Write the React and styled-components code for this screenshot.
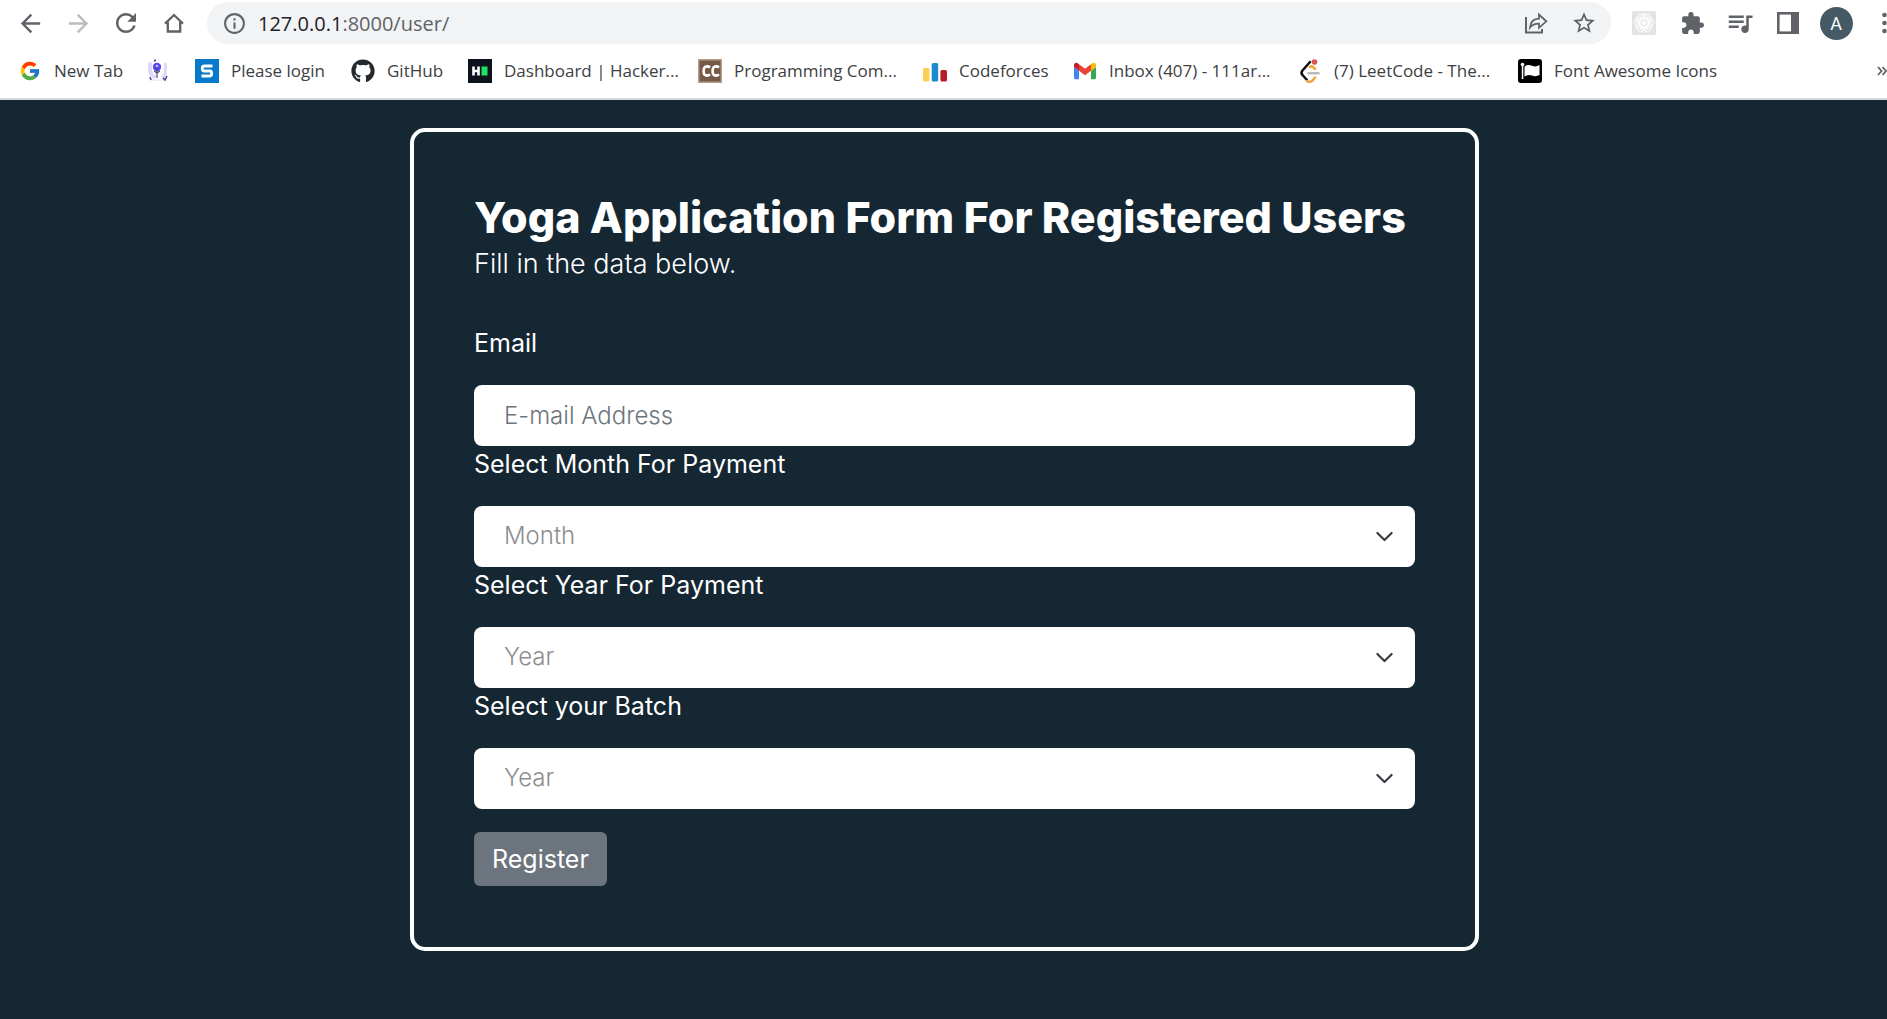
import React from "react";
import styled, { createGlobalStyle } from "styled-components";
import { MdArrowBack, MdArrowForward, MdRefresh, MdStarBorder, MdExtension, MdQueueMusic, MdInfoOutline } from "react-icons/md";
import { FcGoogle } from "react-icons/fc";
import { FaGithub } from "react-icons/fa";

const uiFont = `"Open Sans", "Noto Sans", sans-serif`;
const pageFont = `Inter, "Open Sans", sans-serif`;

const GlobalStyle = createGlobalStyle`
  *, *::before, *::after { box-sizing: border-box; }
  body { margin: 0; background: #152733; }
  button, input, select { font: inherit; }
`;

const Screen = styled.div`
  min-height: 100vh;
  display: flex;
  flex-direction: column;
`;

const Chrome = styled.header`
  background: #fff;
  border-bottom: 2px solid #d5d8da;
  font-family: ${uiFont};
  overflow: hidden;
`;

const Toolbar = styled.div`
  display: flex;
  align-items: center;
  height: 46px;
  padding-left: 16px;
`;

const NavButtons = styled.nav`
  display: flex;
  gap: 20px;
  margin-right: 19px;
`;

const IconButton = styled.button`
  display: flex;
  align-items: center;
  justify-content: ${(p) => p.$align || "center"};
  flex: none;
  width: ${(p) => p.$width || 28}px;
  height: 34px;
  padding: 0;
  border: 0;
  background: none;
  color: ${(p) => (p.$faded ? "#babcbe" : "#5f6368")};
  svg { flex: none; }
`;

const AddressBar = styled.div`
  flex: 1;
  min-width: 0;
  height: 42px;
  display: flex;
  align-items: center;
  gap: 20px;
  padding: 0 13px;
  border-radius: 21px;
  background: #f1f3f4;
`;

const AddressText = styled.a`
  flex: 1;
  margin-left: -10px;
  color: #5f6368;
  font-size: 20px;
  text-decoration: none;
  white-space: nowrap;
`;

const Host = styled.span`
  color: #202124;
`;

const Extensions = styled.div`
  display: flex;
  gap: 16px;
  margin-left: 17px;
`;

const Avatar = styled.span`
  display: grid;
  place-items: center;
  flex: none;
  width: 33px;
  height: 33px;
  border-radius: 50%;
  background: #455a64;
  color: #fff;
  font: 18px Roboto, sans-serif;
`;

const BookmarkBar = styled.nav`
  display: flex;
  align-items: center;
  gap: 25px;
  height: 52px;
  padding: 0 0 2px 18px;
`;

const Bookmark = styled.a`
  display: flex;
  align-items: center;
  gap: 12px;
  flex: none;
  color: #3c4043;
  font-size: 17px;
  line-height: 24px;
  text-decoration: none;
  white-space: nowrap;
`;

const Favicon = styled.span`
  display: grid;
  place-items: center;
  width: 24px;
  height: 24px;
`;

const BookmarkName = styled.span`
  width: ${(p) => p.$width}px;
`;

const More = styled.button`
  margin-left: auto;
  padding: 0;
  border: 0;
  background: none;
  color: #5f6368;
  svg { display: block; }
`;

const Main = styled.main`
  flex: 1;
  padding: 28px 24px 28px 26px;
  color: #fff;
  font-family: ${pageFont};
`;

const Card = styled.form`
  max-width: 1069px;
  margin: 0 auto;
  padding: 60px 60px 61px;
  border: 4px solid #fff;
  border-radius: 15px;
`;

const Title = styled.h1`
  margin: 0;
  font-size: 43px;
  line-height: 50px;
  font-weight: 800;
  @media (min-width: 1120px) {
    white-space: nowrap;
  }
`;

const Intro = styled.p`
  margin: 0 0 39px;
  font-size: 27px;
  line-height: 44px;
  font-weight: 300;
`;

const Label = styled.label`
  display: block;
  margin-bottom: 24px;
  font-size: 25px;
  line-height: 36px;
  font-weight: 400;
`;

const fieldStyle = `
  display: block;
  width: 100%;
  height: 61px;
  padding: 0 30px;
  border: 0;
  border-radius: 8px;
  background: #fff;
  font-size: 24px;
  font-weight: 300;
`;

const TextInput = styled.input`
  ${fieldStyle}
  &::placeholder { color: #6c757d; opacity: 1; }
`;

const SelectBox = styled.div`
  display: grid;
  align-items: center;
  > * { grid-area: 1 / 1; }
  > svg { justify-self: end; margin-right: 21px; pointer-events: none; }
`;

const Select = styled.select`
  ${fieldStyle}
  padding-bottom: 2px;
  appearance: none;
  color: #8d8d8d;
`;

const Submit = styled.button`
  display: block;
  height: 54px;
  margin-top: 23px;
  padding: 0 18px;
  border: 0;
  border-radius: 6px;
  background: #6c757d;
  color: #fff;
  font-size: 25px;
`;

const HomeIcon = () => (
  <svg width="20" height="20" viewBox="0 0 20 20" fill="none" stroke="currentColor" strokeWidth="2.3">
    <path d="M1 10.6 10 2l9 8.600M3.800 9v9.500h12.400V9" />
  </svg>
);

const ShareIcon = () => (
  <svg width="24" height="24" viewBox="0 0 24 24" fill="none" stroke="currentColor">
    <path d="M2 6v15.500h16V18" strokeWidth="2" />
    <path d="M6 16.500c.5-6 4-8.700 9-8.900V3.500l7.300 6.800-7.300 6.500v-4.200c-4-.1-6.700 1-9 3.900z" strokeWidth="1.800" />
  </svg>
);

const ReactIcon = () => (
  <svg width="24" height="24" viewBox="0 0 24 24" fill="none" stroke="#fff">
    <rect width="24" height="24" rx="2" fill="#e3e3e3" stroke="none" />
    {[0, 60, 120].map((a) => (
      <ellipse key={a} cx="12" cy="12" rx="10" ry="4.200" transform={`rotate(${a} 12 12)`} />
    ))}
    {[30, 90, 150].map((a) => (
      <ellipse key={a} cx="12" cy="12" rx="9.500" ry="4" strokeWidth=".8" transform={`rotate(${a} 12 12)`} />
    ))}
    <circle cx="12" cy="12" r="2" fill="#fff" />
  </svg>
);

const PanelIcon = () => (
  <svg width="22" height="22" viewBox="0 0 22 22" fill="none" stroke="currentColor">
    <rect x="1.300" y="1.300" width="19.400" height="19.400" strokeWidth="2.600" />
    <path d="M14 1h7v20h-7z" fill="currentColor" stroke="none" />
  </svg>
);

const DotsIcon = () => (
  <svg width="5" height="22" viewBox="0 0 5 22" fill="currentColor">
    <circle cx="2.500" cy="3" r="2.300" />
    <circle cx="2.500" cy="11" r="2.300" />
    <circle cx="2.500" cy="19" r="2.300" />
  </svg>
);

const PinIcon = () => (
  <svg width="24" height="24" viewBox="0 0 24 24">
    <path d="M2 4q2-2 4 0v8q1 3 4 5l-1 3q-7-3-7-9zM18 4h3v9q0 5-4 7l-2-3q3-2 3-5z" fill="#dcd9fb" />
    <path d="M5 20h15v2H5z" fill="#efedf8" />
    <circle cx="11" cy="8" r="4.200" fill="#5548ee" />
    <circle cx="11" cy="7" r="1.300" fill="#bdb8ff" />
    <path d="M11 8v11M8 12l3 2 3-2" fill="none" stroke="#4a4675" strokeWidth="1.200" />
    <path d="M4 18l1 3M17 19l2 2 2-4M8 2l2-1" fill="none" stroke="#464280" strokeWidth="1.500" />
  </svg>
);

const SIcon = () => (
  <svg width="24" height="24" viewBox="0 0 24 24">
    <path d="M0 0h24v24H0z" fill="#0679c9" />
    <path d="M17.500 7H9.500q-2.300 0-2.300 2.500T9.500 12h5.200q2 0 2 2.500t-2.300 2.500H6.500" fill="none" stroke="#fff" strokeWidth="2.800" />
  </svg>
);

const RankIcon = () => (
  <svg width="24" height="24" viewBox="0 0 24 24">
    <path d="M0 0h24v24H0z" fill="#0e141e" />
    <path d="M5.500 7.500v9M10.500 7.500v9M5 12h6" stroke="#fff" strokeWidth="2.600" />
    <path d="M13.500 7.500h6v9h-6z" fill="#1ee263" />
  </svg>
);

const ChefIcon = () => (
  <svg width="24" height="24" viewBox="0 0 24 24">
    <rect x=".8" y=".8" width="22.400" height="22.400" fill="#765a47" stroke="#b29a86" strokeWidth="1.500" />
    <path d="M12 8.500Q10.800 7.400 9 7.400 5.600 7.400 5.600 12T9 16.600q1.800 0 3-1.200M21 8.500q-1.200-1.100-3-1.100-3.400 0-3.400 4.600t3.400 4.600q1.800 0 3-1.200" fill="none" stroke="#fff" strokeWidth="2.600" />
  </svg>
);

const ForcesIcon = () => (
  <svg width="24" height="24" viewBox="0 0 24 24">
    <rect x="0" y="9" width="6.500" height="13.500" rx="1.500" fill="#f9cf55" />
    <rect x="8.700" y="4" width="6.500" height="18.500" rx="1.500" fill="#1b8bcd" />
    <rect x="17.400" y="11" width="6.600" height="11.500" rx="1.500" fill="#b61f2a" />
  </svg>
);

const MailIcon = () => (
  <svg width="22" height="22" viewBox="52 42 88 66">
    <path fill="#4285f4" d="M58 108h14V74L52 59v43c0 3.320 2.690 6 6 6" />
    <path fill="#34a853" d="M120 108h14c3.320 0 6-2.690 6-6V59l-20 15" />
    <path fill="#fbbc04" d="M120 48v26l20-15v-8c0-7.420-8.470-11.650-14.400-7.200" />
    <path fill="#ea4335" d="M72 74V48l24 18 24-18v26L96 92" />
    <path fill="#c5221f" d="M52 51v8l20 15V48l-5.600-4.200c-5.940-4.450-14.400-.22-14.400 7.200" />
  </svg>
);

const LeetIcon = () => (
  <svg width="24" height="24" viewBox="0 0 24 24" fill="none" strokeWidth="2.500" strokeLinecap="round">
    <path d="M12 3 4.500 11.500q-2 2.500 0 4.500L9 21" stroke="#101010" />
    <path d="M12 8q1.500-1.300 3 0l2 2" stroke="#f2a43a" />
    <path d="M9 22q2.500 2 5 0l3-3.500" stroke="#f2a43a" />
    <path d="M10.500 14.300h10" stroke="#b9b9b9" />
    <circle cx="16.500" cy="3" r="2.800" fill="#d65555" />
  </svg>
);

const FlagIcon = () => (
  <svg width="24" height="24" viewBox="0 0 24 24">
    <rect width="24" height="24" rx="3" fill="#000" />
    <circle cx="4.500" cy="5.500" r="1.800" fill="#fff" />
    <path d="M3.800 6h1.500v14H3.800zM6.500 7.500q3.500-2.500 7.500-.8t7.500-.7v10q-3.500 2-7.500.5t-7.500 1z" fill="#fff" />
  </svg>
);

const MoreIcon = () => (
  <svg width="10" height="12" viewBox="0 0 10 12" fill="none" stroke="currentColor" strokeWidth="1.800">
    <path d="M1 2l3.500 4L1 10M5.500 2 9 6l-3.500 4" />
  </svg>
);

const Chevron = () => (
  <svg width="19" height="19" viewBox="0 0 16 16" fill="none" stroke="#343a40" strokeWidth="1.800" strokeLinecap="round" strokeLinejoin="round">
    <path d="m2 5 6 6 6-6" />
  </svg>
);

const bookmarks = [
  { icon: <FcGoogle size={22} />, text: "New Tab", width: 67 },
  { icon: <PinIcon />, name: "Saved page" },
  { icon: <SIcon />, text: "Please login", width: 95 },
  { icon: <FaGithub size={24} color="#24292e" />, text: "GitHub", width: 56 },
  { icon: <RankIcon />, text: "Dashboard | Hacker...", width: 169 },
  { icon: <ChefIcon />, text: "Programming Com...", width: 164 },
  { icon: <ForcesIcon />, text: "Codeforces", width: 89 },
  { icon: <MailIcon />, text: "Inbox (407) - 111ar...", width: 164 },
  { icon: <LeetIcon />, text: "(7) LeetCode - The...", width: 159 },
  { icon: <FlagIcon />, text: "Font Awesome Icons", width: 164 },
];

const selects = [
  { id: "month", label: "Select Month For Payment", value: "Month" },
  { id: "year", label: "Select Year For Payment", value: "Year" },
  { id: "batch", label: "Select your Batch", value: "Year" },
];

export default function App() {
  return (
    <Screen>
      <GlobalStyle />
      <Chrome>
        <Toolbar>
          <NavButtons>
            <IconButton aria-label="Back"><MdArrowBack size={29} /></IconButton>
            <IconButton aria-label="Forward" $faded><MdArrowForward size={29} /></IconButton>
            <IconButton aria-label="Reload"><MdRefresh size={30} /></IconButton>
            <IconButton aria-label="Home"><HomeIcon /></IconButton>
          </NavButtons>
          <AddressBar>
            <IconButton aria-label="Site information"><MdInfoOutline size={25} /></IconButton>
            <AddressText href="#"><Host>127.0.0.1</Host>:8000/user/</AddressText>
            <IconButton aria-label="Share"><ShareIcon /></IconButton>
            <IconButton aria-label="Bookmark"><MdStarBorder size={26} /></IconButton>
          </AddressBar>
          <Extensions>
            <IconButton $width={32} aria-label="React tools"><ReactIcon /></IconButton>
            <IconButton $width={32} aria-label="Extensions"><MdExtension size={25} /></IconButton>
            <IconButton $width={32} aria-label="Media"><MdQueueMusic size={30} /></IconButton>
            <IconButton $width={32} aria-label="Side panel"><PanelIcon /></IconButton>
            <IconButton $width={32} aria-label="Profile"><Avatar>A</Avatar></IconButton>
            <IconButton $width={19} $align="flex-end" aria-label="Menu"><DotsIcon /></IconButton>
          </Extensions>
        </Toolbar>
        <BookmarkBar>
          {bookmarks.map((b) => (
            <Bookmark key={b.text || b.name} href="#" aria-label={b.name}>
              <Favicon>{b.icon}</Favicon>
              {b.text && <BookmarkName $width={b.width}>{b.text}</BookmarkName>}
            </Bookmark>
          ))}
          <More aria-label="More bookmarks"><MoreIcon /></More>
        </BookmarkBar>
      </Chrome>
      <Main>
        <Card onSubmit={(e) => e.preventDefault()}>
          <Title>Yoga Application Form For Registered Users</Title>
          <Intro>Fill in the data below.</Intro>
          <Label htmlFor="email">Email</Label>
          <TextInput id="email" type="email" placeholder="E-mail Address" />
          {selects.map((s) => (
            <React.Fragment key={s.id}>
              <Label htmlFor={s.id}>{s.label}</Label>
              <SelectBox>
                <Select id={s.id}>
                  <option>{s.value}</option>
                </Select>
                <Chevron />
              </SelectBox>
            </React.Fragment>
          ))}
          <Submit type="submit">Register</Submit>
        </Card>
      </Main>
    </Screen>
  );
}
